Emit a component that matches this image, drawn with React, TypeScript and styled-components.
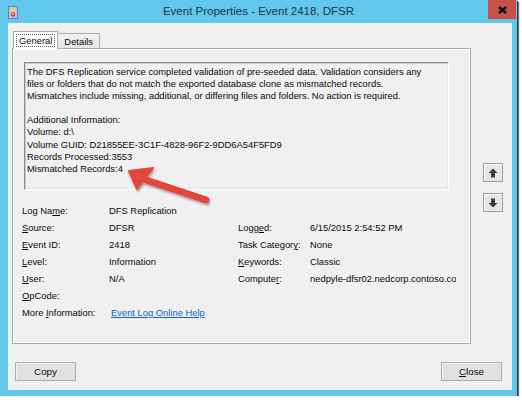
import React from "react";
import styled, { createGlobalStyle } from "styled-components";

const GlobalStyle = createGlobalStyle`
  html, body {
    margin: 0;
    padding: 0;
    background: #ffffff;
  }
  body {
    font-family: "Liberation Sans", Arial, sans-serif;
    font-size: 9.4px;
    color: #0a0a0a;
  }
`;

const Window = styled.div`
  position: relative;
  width: 517px;
  height: 396px;
  background: #62c7ec;
  box-shadow: 1px 1px 0 #3a3a3a, 2px 2px 1px rgba(0, 0, 0, 0.55);
  display: flex;
  flex-direction: column;
`;

const TitleBar = styled.div`
  height: 23px;
  display: grid;
  grid-template-columns: 1fr auto 1fr;
  align-items: start;
`;

const AppIcon = styled.div`
  padding: 6px 0 0 8px;
  display: flex;
`;

const Title = styled.div`
  font-size: 11.5px;
  line-height: 23px;
  color: #1c3553;
  white-space: nowrap;
`;

const CloseBox = styled.div`
  justify-self: end;
  width: 28px;
  height: 19px;
  margin-right: 1px;
  background: #c7504a;
  display: flex;
  align-items: center;
  justify-content: center;
`;

const Client = styled.div`
  flex: 1;
  margin: 0 5px 6px 8px;
  background: #f0f0f0;
  padding: 8px 4px 0 4px;
  display: flex;
  flex-direction: column;
`;

const TopRow = styled.div`
  display: flex;
`;

const TabArea = styled.div`
  width: 459px;
  display: flex;
  flex-direction: column;
`;

const TabStrip = styled.div`
  height: 17px;
  display: flex;
  align-items: flex-end;
  padding-left: 1px;
`;

const Tab = styled.div<{ $active?: boolean }>`
  height: ${(p) => (p.$active ? "18px" : "15px")};
  padding: ${(p) => (p.$active ? "2px 2px 0" : "1px 3px 0")};
  box-sizing: border-box;
  background: ${(p) => (p.$active ? "#ffffff" : "linear-gradient(#f2f2f2, #e5e5e5)")};
  border: 1px solid #acacac;
  border-bottom: none;
  margin-right: ${(p) => (p.$active ? "-1px" : "0")};
  margin-bottom: ${(p) => (p.$active ? "-1px" : "0")};
  position: relative;
  z-index: ${(p) => (p.$active ? 2 : 1)};
`;

const TabLabel = styled.span<{ $focus?: boolean }>`
  display: inline-block;
  padding: 0 2px;
  line-height: 11px;
  border: 1px dotted ${(p) => (p.$focus ? "#5a5a5a" : "transparent")};
`;

const Panel = styled.div`
  height: 296px;
  box-sizing: border-box;
  border: 1px solid #acacac;
  box-shadow: inset 1px 1px 0 #ffffff, inset -1px -1px 0 #ffffff;
  background: #f0f0f0;
  padding: 13px 0 0 9px;
  display: flex;
  flex-direction: column;
`;

const Description = styled.div`
  margin-left: 2px;
  width: 425px;
  height: 128px;
  box-sizing: border-box;
  border: 1px solid;
  border-color: #8c8c8c #ffffff #ffffff #8c8c8c;
  box-shadow: inset 1px 1px 0 #c9c9c9, inset -1px -1px 0 #e3e3e3;
  padding: 3px 2px 0 2px;
  line-height: 12.1px;
  white-space: pre-line;
`;

const Fields = styled.div`
  margin-top: 12px;
  width: 434px;
  display: grid;
  grid-template-columns: 87px 129px 72px 146px;
  grid-auto-rows: 17px;
  align-items: center;
  white-space: nowrap;
  overflow: hidden;
`;

const Cell = styled.div`
  overflow: hidden;
  line-height: 17px;
`;

const Link = styled.a`
  color: #0b63c5;
  text-decoration: underline;
  padding-left: 2px;
`;

const SideButtons = styled.div`
  margin: 132px 0 0 12px;
  display: flex;
  flex-direction: column;
  gap: 11px;
`;

const ArrowButton = styled.div`
  width: 20px;
  height: 19px;
  box-sizing: border-box;
  border: 1px solid #9c9c9c;
  box-shadow: inset 1px 1px 0 #ffffff;
  background: #e6e6e6;
  display: flex;
  align-items: center;
  justify-content: center;
`;

const ButtonRow = styled.div`
  margin-top: 18px;
  display: flex;
  justify-content: space-between;
  padding: 0 6px 0 3px;
`;

const PushButton = styled.div`
  width: 61px;
  height: 19px;
  box-sizing: border-box;
  border: 1px solid #acacac;
  background: #e1e1e1;
  box-shadow: inset 1px 1px 0 #f4f4f4;
  display: flex;
  align-items: center;
  justify-content: center;
  font-size: 9.8px;
`;

const Overlay = styled.svg`
  position: absolute;
  left: 0;
  top: 0;
  pointer-events: none;
`;

const Key = ({ text, k }: { text: string; k: number }) => (
  <>
    {text.slice(0, k)}
    <u>{text[k]}</u>
    {text.slice(k + 1)}
  </>
);

const description = `The DFS Replication service completed validation of pre-seeded data. Validation considers any
files or folders that do not match the exported database clone as mismatched records.
Mismatches include missing, additional, or differing files and folders. No action is required.

Additional Information:
Volume: d:\\
Volume GUID: D21855EE-3C1F-4828-96F2-9DD6A54F5FD9
Records Processed:3553
Mismatched Records:4`;

type Row = {
  label: [string, number];
  value?: React.ReactNode;
  label2?: [string, number];
  value2?: string;
};

const rows: Row[] = [
  { label: ["Log Name:", 6], value: "DFS Replication" },
  { label: ["Source:", 0], value: "DFSR", label2: ["Logged:", 4], value2: "6/15/2015 2:54:52 PM" },
  { label: ["Event ID:", 0], value: "2418", label2: ["Task Category:", 12], value2: "None" },
  { label: ["Level:", 0], value: "Information", label2: ["Keywords:", 0], value2: "Classic" },
  { label: ["User:", 0], value: "N/A", label2: ["Computer:", 7], value2: "nedpyle-dfsr02.nedcorp.contoso.com" },
  { label: ["OpCode:", 0] },
  { label: ["More Information:", 5], value: <Link>Event Log Online Help</Link> },
];

const App = () => {
  return (
    <>
      <GlobalStyle />
      <Window>
        <TitleBar>
          <AppIcon>
            <svg width="10" height="13" viewBox="0 0 10 13">
              <rect x="0.5" y="0.5" width="9" height="12" fill="#b9c7e6" stroke="#6f7fa8" />
              <rect x="2" y="2" width="6" height="3" fill="#e9d66b" />
              <circle cx="5" cy="8.5" r="2.3" fill="#d9423a" />
              <rect x="4.5" y="7" width="1" height="2" fill="#fff" />
            </svg>
          </AppIcon>
          <Title>Event Properties - Event 2418, DFSR</Title>
          <CloseBox>
            <svg width="9" height="8" viewBox="0 0 9 8">
              <path d="M1 1 L8 7 M8 1 L1 7" stroke="#111" strokeWidth="2.4" />
            </svg>
          </CloseBox>
        </TitleBar>
        <Client>
          <TopRow>
            <TabArea>
              <TabStrip>
                <Tab $active>
                  <TabLabel $focus>General</TabLabel>
                </Tab>
                <Tab>
                  <TabLabel>Details</TabLabel>
                </Tab>
              </TabStrip>
              <Panel>
                <Description>{description}</Description>
                <Fields>
                  {rows.map((r, i) => (
                    <React.Fragment key={i}>
                      <Cell>
                        <Key text={r.label[0]} k={r.label[1]} />
                      </Cell>
                      <Cell>{r.value}</Cell>
                      <Cell>{r.label2 && <Key text={r.label2[0]} k={r.label2[1]} />}</Cell>
                      <Cell>{r.value2}</Cell>
                    </React.Fragment>
                  ))}
                </Fields>
              </Panel>
            </TabArea>
            <SideButtons>
              <ArrowButton>
                <svg width="10" height="10" viewBox="0 0 10 10">
                  <path d="M5 0.5 L9.5 5 L7 5 L7 9.5 L3 9.5 L3 5 L0.5 5 Z" fill="#3c3c3c" />
                </svg>
              </ArrowButton>
              <ArrowButton>
                <svg width="10" height="10" viewBox="0 0 10 10">
                  <path d="M5 9.5 L9.5 5 L7 5 L7 0.5 L3 0.5 L3 5 L0.5 5 Z" fill="#3c3c3c" />
                </svg>
              </ArrowButton>
            </SideButtons>
          </TopRow>
          <ButtonRow>
            <PushButton>Copy</PushButton>
            <PushButton>
              <Key text="Close" k={0} />
            </PushButton>
          </ButtonRow>
        </Client>
        <Overlay width="522" height="400" viewBox="0 0 522 400">
          <defs>
            <filter id="sh" x="-20%" y="-20%" width="140%" height="140%">
              <feDropShadow dx="1" dy="2" stdDeviation="1.2" floodColor="#000" floodOpacity="0.35" />
            </filter>
          </defs>
          <g filter="url(#sh)" fill="#e2473d" stroke="#e2473d">
            <line x1="206" y1="200" x2="146" y2="180" strokeWidth="7" strokeLinecap="round" />
            <path d="M129 171 L153 168 L137 189 Z" strokeWidth="2" strokeLinejoin="round" />
          </g>
        </Overlay>
      </Window>
    </>
  );
};

export default App;
